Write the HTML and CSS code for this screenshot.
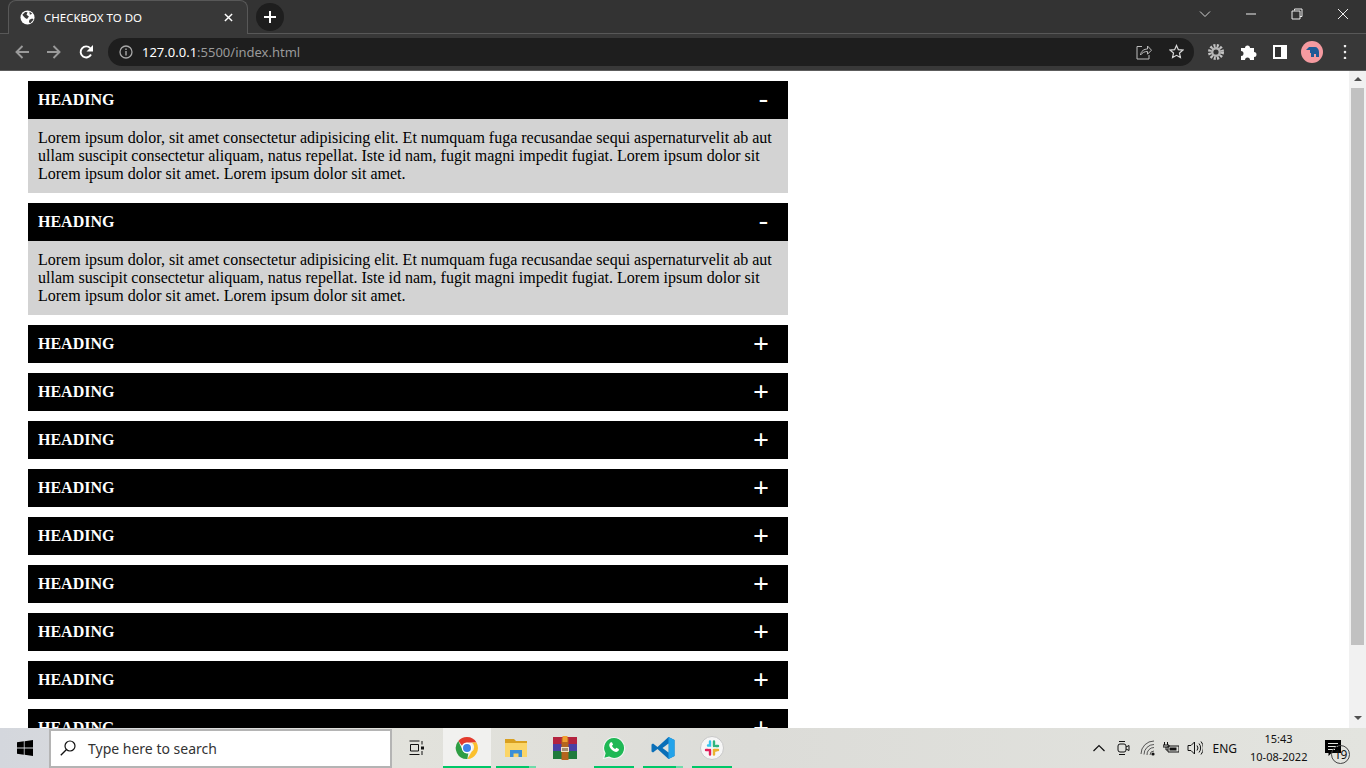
FILE: index.html
```html
<!DOCTYPE html>
<html lang="en">

<head>
    <meta charset="UTF-8">
    <title>CHECKBOX TO DO</title>
    <link rel="stylesheet" href="styles.css">
</head>

<body>

    <!-- Browser tabs -->
    <div class="tab-strip">
        <div class="tab">
            <svg class="tab-globe" viewBox="0 0 16 16"><circle cx="8" cy="8" r="7.500" fill="#fff"/><path d="M2.500 5l3-3 2.500.5-1 2.500 2.500 2-2 2.500-2-1-2-2zM10 10.500l3-1.500 1.500 1-3.500 4-1.500-1zM10 1.500l3 2.500-2.500 1z" fill="#3a3a3a"/></svg>
            <span class="tab-title">CHECKBOX TO DO</span>
            <svg class="tab-close" viewBox="0 0 10 10"><path d="M1 1l8 8M9 1l-8 8" stroke="#fff" stroke-width="1.600"/></svg>
        </div>
        <div class="new-tab">
            <svg viewBox="0 0 12 12"><path d="M6 0v12M0 6h12" stroke="#fff" stroke-width="2"/></svg>
        </div>
        <div class="window-controls">
            <svg viewBox="0 0 12 12"><path d="M1 3.500l5 5 5-5" fill="none" stroke="#d0d0d0"/></svg>
            <svg viewBox="0 0 12 12"><path d="M1 6h10" stroke="#eee"/></svg>
            <svg viewBox="0 0 12 12"><path d="M3.500 2.500V1h7.500v7.500H9M1 3h8v8H1z" fill="none" stroke="#eee"/></svg>
            <svg viewBox="0 0 12 12"><path d="M1 1l10 10M11 1L1 11" stroke="#eee"/></svg>
        </div>
    </div>

    <!-- Address bar -->
    <div class="toolbar">
        <div class="nav-buttons">
            <svg viewBox="0 0 14 14"><path d="M14 7H1.500M7.500 1L1.500 7l6 6" fill="none" stroke="#9a9a9a" stroke-width="1.900"/></svg>
            <svg viewBox="0 0 14 14"><path d="M0 7h12.500M6.500 1l6 6-6 6" fill="none" stroke="#9a9a9a" stroke-width="1.900"/></svg>
            <svg viewBox="0 0 14 14"><path d="M12 9.500A5.500 5.500 0 1 1 11.200 3.200" fill="none" stroke="#fff" stroke-width="1.900"/><path d="M14 0v6.500H7.500z" fill="#fff"/></svg>
        </div>
        <div class="omnibox">
            <svg class="info-icon" viewBox="0 0 14 14"><circle cx="7" cy="7" r="6" fill="none" stroke="#a8a8a8" stroke-width="1.300"/><path d="M7 6v4.500M7 3.500v1.500" stroke="#a8a8a8" stroke-width="1.400"/></svg>
            <span class="url"><span class="url-host">127.0.0.1</span>:5500/index.html</span>
            <svg class="share-icon" viewBox="0 0 16 16"><path d="M6 2.500H1v12.500h12v-4" fill="none" stroke="#bdbdbd"/><path d="M4.500 11c.5-4 3.500-6 7-6V2l4 4.200-4 4V7.500c-3 0-5 1-7 3.500z" fill="none" stroke="#bdbdbd"/></svg>
            <svg class="star-icon" viewBox="0 0 16 16"><path d="M8 1.500l2 4.500 4.800.5-3.600 3.200 1 4.800L8 12.100l-4.200 2.400 1-4.800L1.200 6.500 6 6z" fill="none" stroke="#d8d8d8" stroke-width="1.300"/></svg>
        </div>
        <div class="extensions">
            <svg viewBox="0 0 16 16"><circle cx="8" cy="8" r="6.300" fill="none" stroke="#c4c4c4" stroke-width="3.400" stroke-dasharray="2 1.300"/><circle cx="8" cy="8" r="5" fill="#b4b4b4"/><circle cx="8" cy="8" r="2.600" fill="#333"/></svg>
            <svg viewBox="0 0 16 16"><path d="M0 4h4a2.500 2.500 0 1 1 5 0h4v4a2.500 2.500 0 1 1 0 5v3H9a2.500 2.500 0 1 0-5 0H0v-4a2.500 2.500 0 1 0 0-5z" fill="#fff"/></svg>
            <svg viewBox="0 0 14 14"><path d="M0 0h14v14H0z" fill="#fff"/><path d="M2 2h6v10H2z" fill="#333"/></svg>
            <svg class="avatar" viewBox="0 0 22 22"><circle cx="11" cy="11" r="11" fill="#f59aa0"/><path d="M5 9l3-3h6c2 0 4 2 4 5v5h-3v-3h-2v3h-3v-4H9V9z" fill="#1f5a96"/></svg>
            <svg class="menu-dots" viewBox="0 0 4 14"><path d="M2 1v.1M2 7v.1M2 13v.1" stroke="#eee" stroke-width="2.600" stroke-linecap="round"/></svg>
        </div>
    </div>

    <div class="viewport">
        <div class="page">
            <div class="accordion-item">
                <div class="accordion-head"><span>HEADING</span><span class="sign">-</span></div>
                <div class="accordion-body">Lorem ipsum dolor, sit amet consectetur adipisicing elit. Et numquam fuga recusandae sequi aspernaturvelit ab aut ullam suscipit consectetur aliquam, natus repellat. Iste id nam, fugit magni impedit fugiat. Lorem ipsum dolor sit Lorem ipsum dolor sit amet. Lorem ipsum dolor sit amet.</div>
            </div>
            <div class="accordion-item">
                <div class="accordion-head"><span>HEADING</span><span class="sign">-</span></div>
                <div class="accordion-body">Lorem ipsum dolor, sit amet consectetur adipisicing elit. Et numquam fuga recusandae sequi aspernaturvelit ab aut ullam suscipit consectetur aliquam, natus repellat. Iste id nam, fugit magni impedit fugiat. Lorem ipsum dolor sit Lorem ipsum dolor sit amet. Lorem ipsum dolor sit amet.</div>
            </div>
            <div class="accordion-item"><div class="accordion-head"><span>HEADING</span><span class="sign sign-plus">+</span></div></div>
            <div class="accordion-item"><div class="accordion-head"><span>HEADING</span><span class="sign sign-plus">+</span></div></div>
            <div class="accordion-item"><div class="accordion-head"><span>HEADING</span><span class="sign sign-plus">+</span></div></div>
            <div class="accordion-item"><div class="accordion-head"><span>HEADING</span><span class="sign sign-plus">+</span></div></div>
            <div class="accordion-item"><div class="accordion-head"><span>HEADING</span><span class="sign sign-plus">+</span></div></div>
            <div class="accordion-item"><div class="accordion-head"><span>HEADING</span><span class="sign sign-plus">+</span></div></div>
            <div class="accordion-item"><div class="accordion-head"><span>HEADING</span><span class="sign sign-plus">+</span></div></div>
            <div class="accordion-item"><div class="accordion-head"><span>HEADING</span><span class="sign sign-plus">+</span></div></div>
            <div class="accordion-item"><div class="accordion-head"><span>HEADING</span><span class="sign sign-plus">+</span></div></div>
        </div>
        <div class="scrollbar">
            <div class="scroll-up"></div>
            <div class="scroll-thumb"></div>
            <div class="scroll-down"></div>
        </div>
    </div>

    <!-- Windows taskbar -->
    <div class="taskbar">
        <div class="start">
            <svg viewBox="0 0 16 16"><path d="M0 2.300l6.800-1v6.300H0zM7.600 1.200L16 0v7.600H7.600zM0 8.400h6.800v6.300l-6.800-1zM7.600 8.400H16V16l-8.400-1.200z" fill="#000"/></svg>
        </div>
        <div class="search-box">
            <svg viewBox="0 0 16 16"><circle cx="10" cy="6" r="5" fill="none" stroke="#111" stroke-width="1.200"/><path d="M6.500 9.500L.8 15.200" stroke="#111" stroke-width="1.300"/></svg>
            <span>Type here to search</span>
        </div>
        <div class="task-view">
            <svg viewBox="0 0 16 16"><path d="M.5 1h10M.5 14.500h10M1.500 4.500h8v6.500h-8z" fill="none" stroke="#111"/><path d="M13 1v3.500M13 11v4" stroke="#111"/><path d="M12 6.500h3v3h-3z" fill="#111"/></svg>
        </div>
        <div class="task-apps">
            <div class="app app-active">
                <svg viewBox="0 0 24 24"><path d="M12 1a11 11 0 0 1 9.500 5.500H12a5.500 5.500 0 0 0-5 3.200L3.300 5A11 11 0 0 1 12 1z" fill="#e33b2e"/><path d="M21.500 6.500A11 11 0 0 1 12.300 23l4.500-7.500a5.500 5.500 0 0 0 0-9z" fill="#fbc02d"/><path d="M12.300 23A11 11 0 0 1 3.300 5L7.800 14.500a5.500 5.500 0 0 0 5.500 3z" fill="#2f9e44"/><circle cx="12" cy="12" r="5.200" fill="#fff"/><circle cx="12" cy="12" r="4" fill="#3f83e8"/></svg>
            </div>
            <div class="app app-tail">
                <svg viewBox="0 0 24 24"><path d="M1 3h9l2 2h11v16H1z" fill="#d9a020"/><path d="M1 7h22v14H1z" fill="#fbd567"/><path d="M6 21v-7h12v7h-3.500v-3.500h-5V21z" fill="#3a8fd8"/></svg>
            </div>
            <div class="app app-none">
                <svg viewBox="0 0 24 24"><path d="M0 1h24v7H0z" fill="#b3233f"/><path d="M0 8h24v7H0z" fill="#4a3fa5"/><path d="M0 15h24v8H0z" fill="#1f7a3c"/><path d="M8.500 2h7v22h-7z" fill="#b5651d"/><path d="M8 11h8v5H8z" fill="#f2e2c4"/><path d="M10 12v3M12 12v3M14 12v3" stroke="#5a3a20"/><path d="M9.500 0h5v6h-5z" fill="#f0a030"/></svg>
            </div>
            <div class="app">
                <svg viewBox="0 0 24 24"><path d="M12 1.500A10.500 10.500 0 0 0 3 17.300L1.500 22.500l5.400-1.400A10.500 10.500 0 1 0 12 1.500z" fill="#1fb855" stroke="#f4f4f4" stroke-width="1.200"/><path d="M8.500 6.500c-2 1.500-1.500 4.500 1 7s5.500 3.200 7 1.300c.5-.8.500-1.500.2-1.800l-2.300-1.200-1.200 1.300c-1.300-.5-2.700-1.900-3.300-3.300l1.200-1.100-1-2.300c-.5-.3-1-.3-1.600.1z" fill="#fff"/></svg>
            </div>
            <div class="app app-tail">
                <svg viewBox="0 0 24 24"><path d="M17.500 1L23.500 4v16l-6 3L6.500 13 2 16.500.5 15.500V8.500L2 7.500 6.500 11z" fill="#0a6fb8"/><path d="M17.500 1L23.500 4v16l-6 3z" fill="#23a3ea"/><path d="M17.500 7.500v9L11.500 12z" fill="#e0e1dc"/></svg>
            </div>
            <div class="app">
                <svg viewBox="0 0 24 24"><circle cx="12" cy="12" r="11.500" fill="#f6f6f6" stroke="#c8c8c8"/><path d="M10 5.500v4H8" fill="none" stroke="#36c5f0" stroke-width="2.400" stroke-linecap="round"/><path d="M14 5.500v4.500M18 10h-2" fill="none" stroke="#2eb67d" stroke-width="2.400" stroke-linecap="round"/><path d="M14 18.500v-4h2M18 14h-4" fill="none" stroke="#ecb22e" stroke-width="2.400" stroke-linecap="round"/><path d="M10 14v4.500M6 14h2" fill="none" stroke="#e01e5a" stroke-width="2.400" stroke-linecap="round"/></svg>
            </div>
        </div>
        <div class="tray">
            <svg class="tray-chevron" viewBox="0 0 12 8"><path d="M.5 7L6 1.500 11.500 7" fill="none" stroke="#111" stroke-width="1.200"/></svg>
            <svg class="tray-icon" viewBox="0 0 16 16"><rect x="2" y="4" width="8" height="8" rx="2" fill="none" stroke="#111"/><path d="M10 7l3-1.500v5L10 9M3 1.500h6M3 14.500h6" fill="none" stroke="#111"/></svg>
            <svg class="tray-icon tray-wifi" viewBox="0 0 16 16"><path d="M1 14A13 13 0 0 1 14 1M4 14.500A10 10 0 0 1 14 4.500M7 15a7 7 0 0 1 7-7.500M10 15a4 4 0 0 1 4-4" fill="none" stroke="#555"/><circle cx="13" cy="14" r="1.600" fill="#111"/></svg>
            <svg class="tray-icon" viewBox="0 0 16 16"><path d="M5 6h11v6H5z" fill="none" stroke="#111"/><path d="M6.500 7.500h7v3h-7z" fill="#111"/><path d="M1.500 2v3M4.500 2v3M0 5h6v2H0zM3 7v3h2" fill="none" stroke="#111"/></svg>
            <svg class="tray-icon" viewBox="0 0 16 16"><path d="M1 5.500h3L7.500 2v12L4 10.500H1z" fill="none" stroke="#111"/><path d="M10 5.500a4 4 0 0 1 0 5M12 3.500a7 7 0 0 1 0 9M14 1.500a10 10 0 0 1 0 13" fill="none" stroke="#111"/></svg>
            <span class="tray-lang">ENG</span>
            <div class="clock">
                <div>15:43</div>
                <div>10-08-2022</div>
            </div>
            <div class="notify">
                <svg viewBox="0 0 16 16"><path d="M0 0h16v13H6.500L3.500 16v-3H0z" fill="#000"/><path d="M3 3.500h10M3 6.500h10M3 9.500h7" stroke="#e2e3dd"/></svg>
                <span class="notify-count">19</span>
            </div>
        </div>
    </div>

</body>

</html>
```

FILE: styles.css
```css
html, body {
    margin: 0;
    padding: 0;
    height: 100%;
    overflow: hidden;
}

body {
    display: flex;
    flex-direction: column;
    height: 768px;
    font-family: "Noto Sans", sans-serif;
    background-color: white;
}

svg {
    display: block;
    flex-shrink: 0;
}

/* Tabs */
.tab-strip {
    height: 34px;
    display: flex;
    align-items: flex-start;
    background-color: #333;
    box-shadow: inset 0 -1px 0 #585858;
    flex-shrink: 0;
}

.tab {
    width: 240px;
    height: 34px;
    margin-left: 8px;
    box-sizing: border-box;
    padding: 0 14px 0 11px;
    display: flex;
    align-items: center;
    background-color: #383838;
    border: 1px solid #585858;
    border-bottom: none;
    border-radius: 8px 8px 0 0;
}

.tab-globe {
    width: 15px;
    height: 15px;
}

.tab-title {
    margin-left: 9px;
    flex: 1;
    color: white;
    font-size: 11.500px;
    white-space: nowrap;
}

.tab-close {
    width: 9px;
    height: 9px;
}

.new-tab {
    width: 28px;
    height: 28px;
    margin: 3px 0 0 8px;
    border-radius: 50%;
    background-color: #1e1e1e;
    display: flex;
    align-items: center;
    justify-content: center;
}

.new-tab svg {
    width: 12px;
    height: 12px;
}

.window-controls {
    margin-left: auto;
    height: 28px;
    padding-right: 17px;
    display: flex;
    align-items: center;
    gap: 34px;
}

.window-controls svg {
    width: 12px;
    height: 12px;
}

/* Address bar */
.toolbar {
    height: 37px;
    box-sizing: border-box;
    padding: 4px 0 5px 15px;
    display: flex;
    align-items: center;
    background-color: #383838;
    border-bottom: 1px solid #5c5c5c;
    flex-shrink: 0;
}

.nav-buttons {
    display: flex;
    gap: 18px;
}

.nav-buttons svg {
    width: 14px;
    height: 14px;
}

.omnibox {
    width: 1086px;
    height: 28px;
    margin-left: 15px;
    box-sizing: border-box;
    padding: 0 10px 0 11px;
    display: flex;
    align-items: center;
    background-color: #1e1e1e;
    border-radius: 14px;
}

.info-icon {
    width: 14px;
    height: 14px;
}

.url {
    margin-left: 9px;
    flex: 1;
    color: #9a9a9a;
    font-size: 13px;
}

.url-host {
    color: white;
}

.share-icon {
    width: 16px;
    height: 16px;
}

.star-icon {
    width: 15px;
    height: 15px;
    margin-left: 17px;
}

.extensions {
    margin-left: 14px;
    display: flex;
    align-items: center;
}

.extensions svg {
    width: 16px;
    height: 16px;
    margin-right: 17px;
}

.extensions svg:nth-child(2) {
    margin-right: 16px;
}

.extensions svg:nth-child(3) {
    width: 14px;
    height: 14px;
    margin-right: 14px;
}

.extensions .avatar {
    width: 22px;
    height: 22px;
    margin-right: 20px;
}

.extensions .menu-dots {
    width: 4px;
    height: 14px;
    margin-right: 0;
}

/* Page */
.viewport {
    flex: 1;
    min-height: 0;
    display: flex;
    overflow: hidden;
}

.page {
    flex: 1;
    padding: 10px 0 0 28px;
    font-family: "Liberation Serif", serif;
    font-size: 16px;
    line-height: 18px;
}

.accordion-item {
    width: 760px;
    margin-bottom: 10px;
}

.accordion-head {
    display: flex;
    justify-content: space-between;
    padding: 10px 20px 10px 10px;
    background-color: black;
    color: white;
    font-weight: bold;
}

.sign {
    font-size: 28px;
    font-weight: normal;
    line-height: 14px;
}

.sign-plus {
    margin-right: -1px;
    font-weight: bold;
    line-height: 18px;
}

.accordion-body {
    padding: 10px;
    background-color: lightgray;
    color: black;
}

.scrollbar {
    width: 17px;
    display: flex;
    flex-direction: column;
    align-items: center;
    background-color: #f1f1f1;
}

.scroll-up {
    margin-top: 6px;
    border-left: 4px solid transparent;
    border-right: 4px solid transparent;
    border-bottom: 4px solid #505050;
}

.scroll-thumb {
    width: 13px;
    height: 557px;
    margin-top: 7px;
    background-color: #c1c1c1;
}

.scroll-down {
    margin-top: 71px;
    border-left: 4px solid transparent;
    border-right: 4px solid transparent;
    border-top: 4px solid #505050;
}

/* Taskbar */
.taskbar {
    height: 40px;
    display: flex;
    align-items: stretch;
    background: linear-gradient(90deg, #d4d7dd 0%, #e2e2dc 30%, #dcdcd8 55%, #e3e4df 100%);
    flex-shrink: 0;
}

.start {
    width: 49px;
    display: flex;
    align-items: center;
    justify-content: center;
}

.start svg {
    width: 16px;
    height: 16px;
}

.search-box {
    width: 343px;
    box-sizing: border-box;
    margin-top: 1px;
    padding: 0 0 1px 9px;
    display: flex;
    align-items: center;
    background-color: white;
    border: 2px solid #b4b4b4;
    font-size: 14px;
    color: #333;
}

.search-box svg {
    width: 16px;
    height: 16px;
    margin-right: 12px;
}

.task-view {
    width: 51px;
    box-sizing: border-box;
    padding-right: 2px;
    display: flex;
    align-items: center;
    justify-content: center;
}

.task-view svg {
    width: 16px;
    height: 16px;
}

.task-apps {
    display: flex;
}

.app {
    width: 40px;
    margin-right: 9px;
    box-sizing: border-box;
    display: flex;
    align-items: center;
    justify-content: center;
    border-bottom: 2px solid #00c868;
    padding-top: 2px;
}

.app svg {
    width: 24px;
    height: 24px;
}

.app-active {
    width: 48px;
    margin-right: 5px;
    background-color: #f1f1ef;
}

.app-tail {
    border-image: linear-gradient(90deg, #00c868 80%, #6fdcaa 80%) 1;
}

.app-none {
    width: 49px;
    margin-right: 0;
    padding-right: 9px;
    border-bottom-color: transparent;
}

.tray {
    margin-left: auto;
    padding-right: 25px;
    display: flex;
    align-items: center;
    font-size: 12px;
    color: #111;
}

.tray-chevron {
    width: 12px;
    height: 8px;
    margin-right: 11px;
}

.tray-icon {
    width: 16px;
    height: 16px;
    margin-right: 8px;
}

.tray-wifi {
    margin-right: 7px;
}

.tray-lang {
    margin-left: 1px;
}

.clock {
    width: 57px;
    margin-left: 13px;
    font-size: 11px;
    text-align: center;
    line-height: 18px;
    white-space: nowrap;
}

.notify {
    position: relative;
    margin-left: 18px;
}

.notify svg {
    width: 16px;
    height: 16px;
}

.notify-count {
    position: absolute;
    left: 6px;
    top: 5px;
    width: 17px;
    height: 17px;
    border: 1px solid #444;
    border-radius: 50%;
    font-size: 12px;
    letter-spacing: -0.5px;
    line-height: 17px;
    text-align: center;
}
```
